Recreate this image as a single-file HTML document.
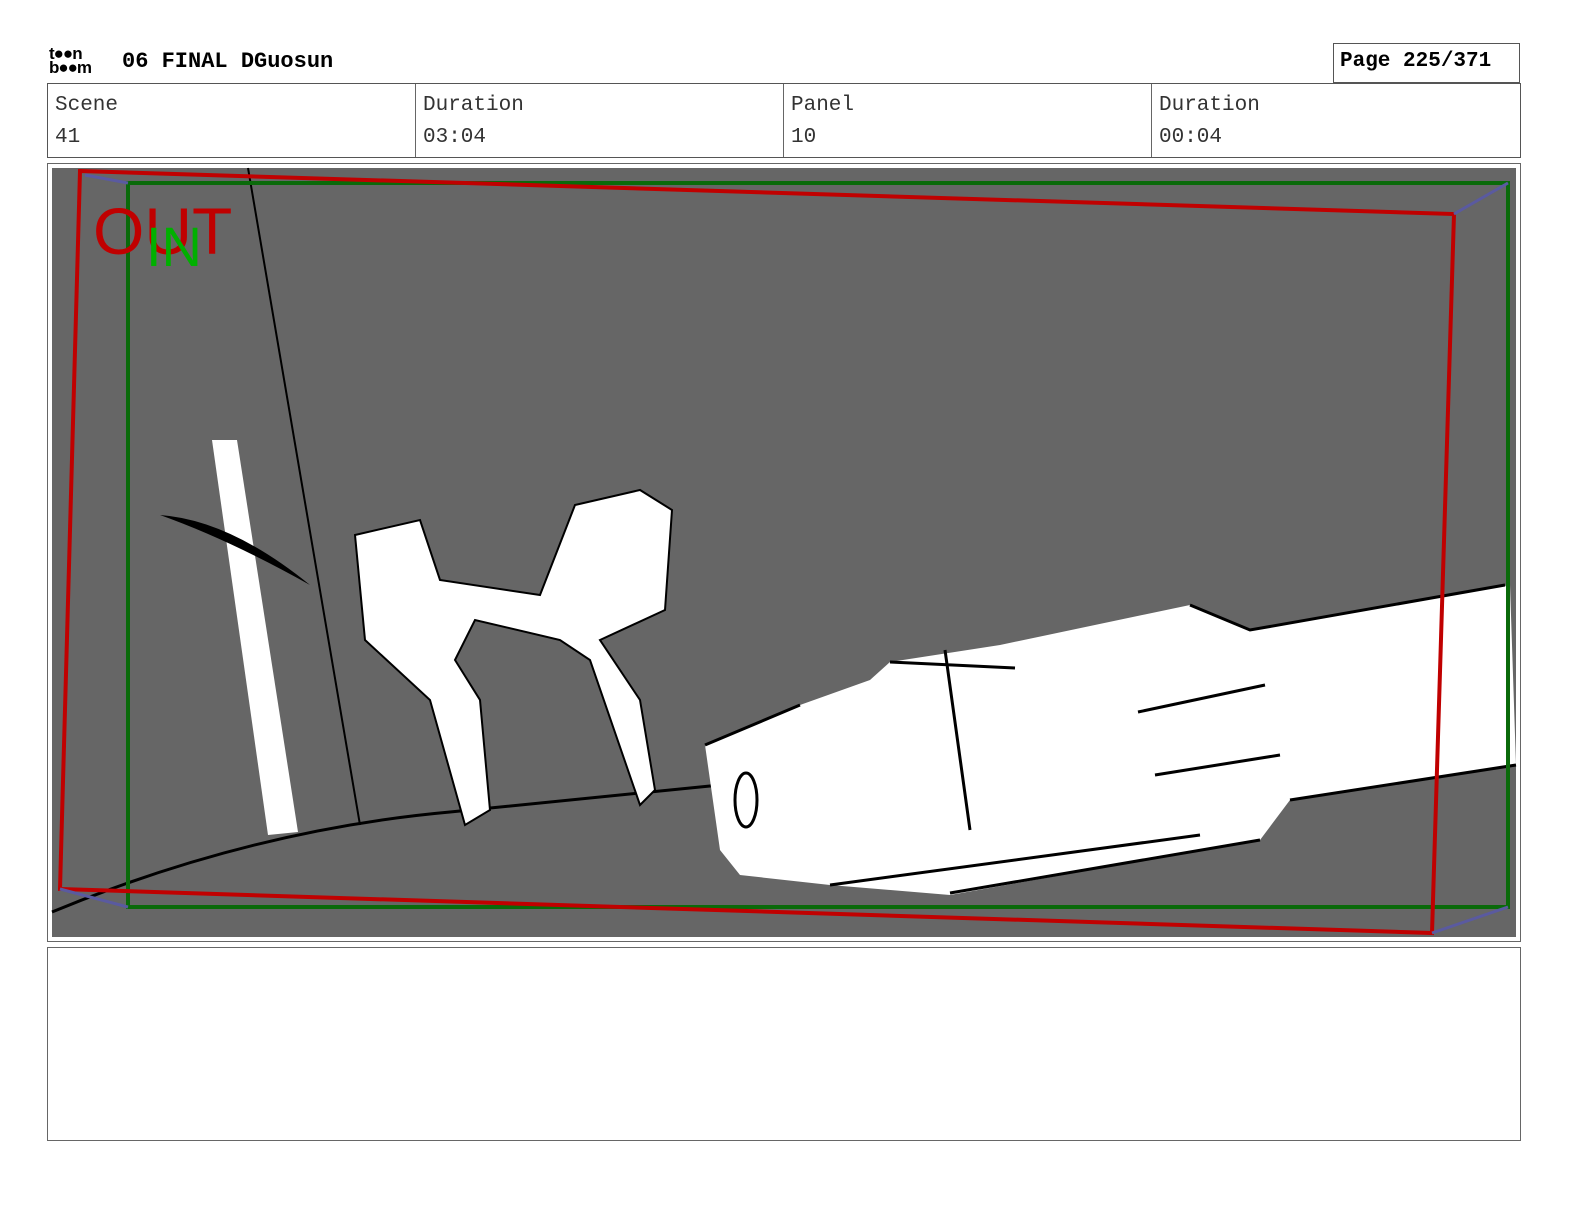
<!DOCTYPE html>
<html style="overflow:hidden"><head><meta charset="utf-8"><style>
html,body{overflow:hidden;scrollbar-width:none}
body{margin:0;background:#fff;width:1584px;height:1224px;position:relative;font-family:"Liberation Mono",monospace}
.t{position:absolute;color:#000}
.cell{position:absolute;top:84px;height:73px;border-right:1px solid #666;box-sizing:border-box;padding:6px 0 0 7px;font-size:21px;color:#333;line-height:32px}
</style></head><body>
<div class="t" style="left:49px;top:47px;font-family:'Liberation Sans',sans-serif;font-weight:bold;font-size:17px;line-height:14px;letter-spacing:-1px">t●●n<br>b●●m</div>
<div class="t" style="left:122px;top:49px;font-size:22px;font-weight:bold">06 FINAL DGuosun</div>
<div style="position:absolute;left:1333px;top:43px;width:187px;height:40px;border:1px solid #555;box-sizing:border-box;font-size:21px;font-weight:bold;padding:6px 0 0 6px">Page 225/371</div>
<div style="position:absolute;left:47px;top:83px;width:1474px;height:75px;border:1px solid #555;box-sizing:border-box"></div>
<div class="cell" style="left:48px;width:368px">Scene<br>41</div>
<div class="cell" style="left:416px;width:368px">Duration<br>03:04</div>
<div class="cell" style="left:784px;width:368px">Panel<br>10</div>
<div class="cell" style="left:1152px;width:368px;border:none">Duration<br>00:04</div>
<div style="position:absolute;left:47px;top:163px;width:1474px;height:779px;border:1px solid #666;box-sizing:border-box"></div>
<svg style="position:absolute;left:0;top:0" width="1584" height="1224">
<rect x="52" y="168" width="1464" height="769" fill="#666"/>
<path d="M52 912 Q250 830 450 812 L720 785" stroke="#000" stroke-width="3" fill="none"/>
<path d="M248 168 L360 825" stroke="#000" stroke-width="2"/>
<path d="M212 440 L237 440 L298 832 L268 835Z" fill="#fff"/>
<path d="M355 535 L420 520 L440 580 L540 595 L575 505 L640 490 L672 510 L665 610 L600 640 L640 700 L655 790 L640 805 L590 660 L560 640 L475 620 L455 660 L480 700 L490 810 L465 825 L430 700 L365 640Z" fill="#fff" stroke="#000" stroke-width="2"/>
<path d="M705 745 L800 705 L870 680 L890 662 L1000 645 L1190 605 L1250 630 L1510 585 L1516 765 L1290 800 L1260 840 L950 895 L830 885 L740 875 L720 850Z" fill="#fff"/>
<path d="M705 745 L800 705 M890 662 L1015 668 M1190 605 L1250 630 L1505 585 M1290 800 L1516 765 M945 650 L970 830 M1138 712 L1265 685 M1155 775 L1280 755 M830 885 L1200 835 M950 893 L1260 840" stroke="#000" stroke-width="3" fill="none"/>
<ellipse cx="746" cy="800" rx="11" ry="27" fill="none" stroke="#000" stroke-width="3"/>
<path d="M160 515 Q230 520 310 585 Q230 540 160 515Z" fill="#000"/>
<path d="M128 183 L1508 183 L1508 907 L128 907Z" fill="none" stroke="#0a6a0a" stroke-width="4"/>
<path d="M80 171 L1454 214 L1432 933 L60 889Z" fill="none" stroke="#c00000" stroke-width="4"/>
<path d="M85 175 L128 183 M1454 214 L1508 183 M60 889 L128 907 M1432 933 L1508 907" stroke="#5a5aa0" stroke-width="3"/>
<text x="93" y="254" font-family="Liberation Sans,sans-serif" font-size="66" fill="#c00000">OUT</text>
<text x="146" y="266" font-family="Liberation Sans,sans-serif" font-size="56" fill="#00b000">IN</text>
</svg>
<div style="position:absolute;left:47px;top:947px;width:1474px;height:194px;border:1px solid #666;box-sizing:border-box"></div>
</body></html>
